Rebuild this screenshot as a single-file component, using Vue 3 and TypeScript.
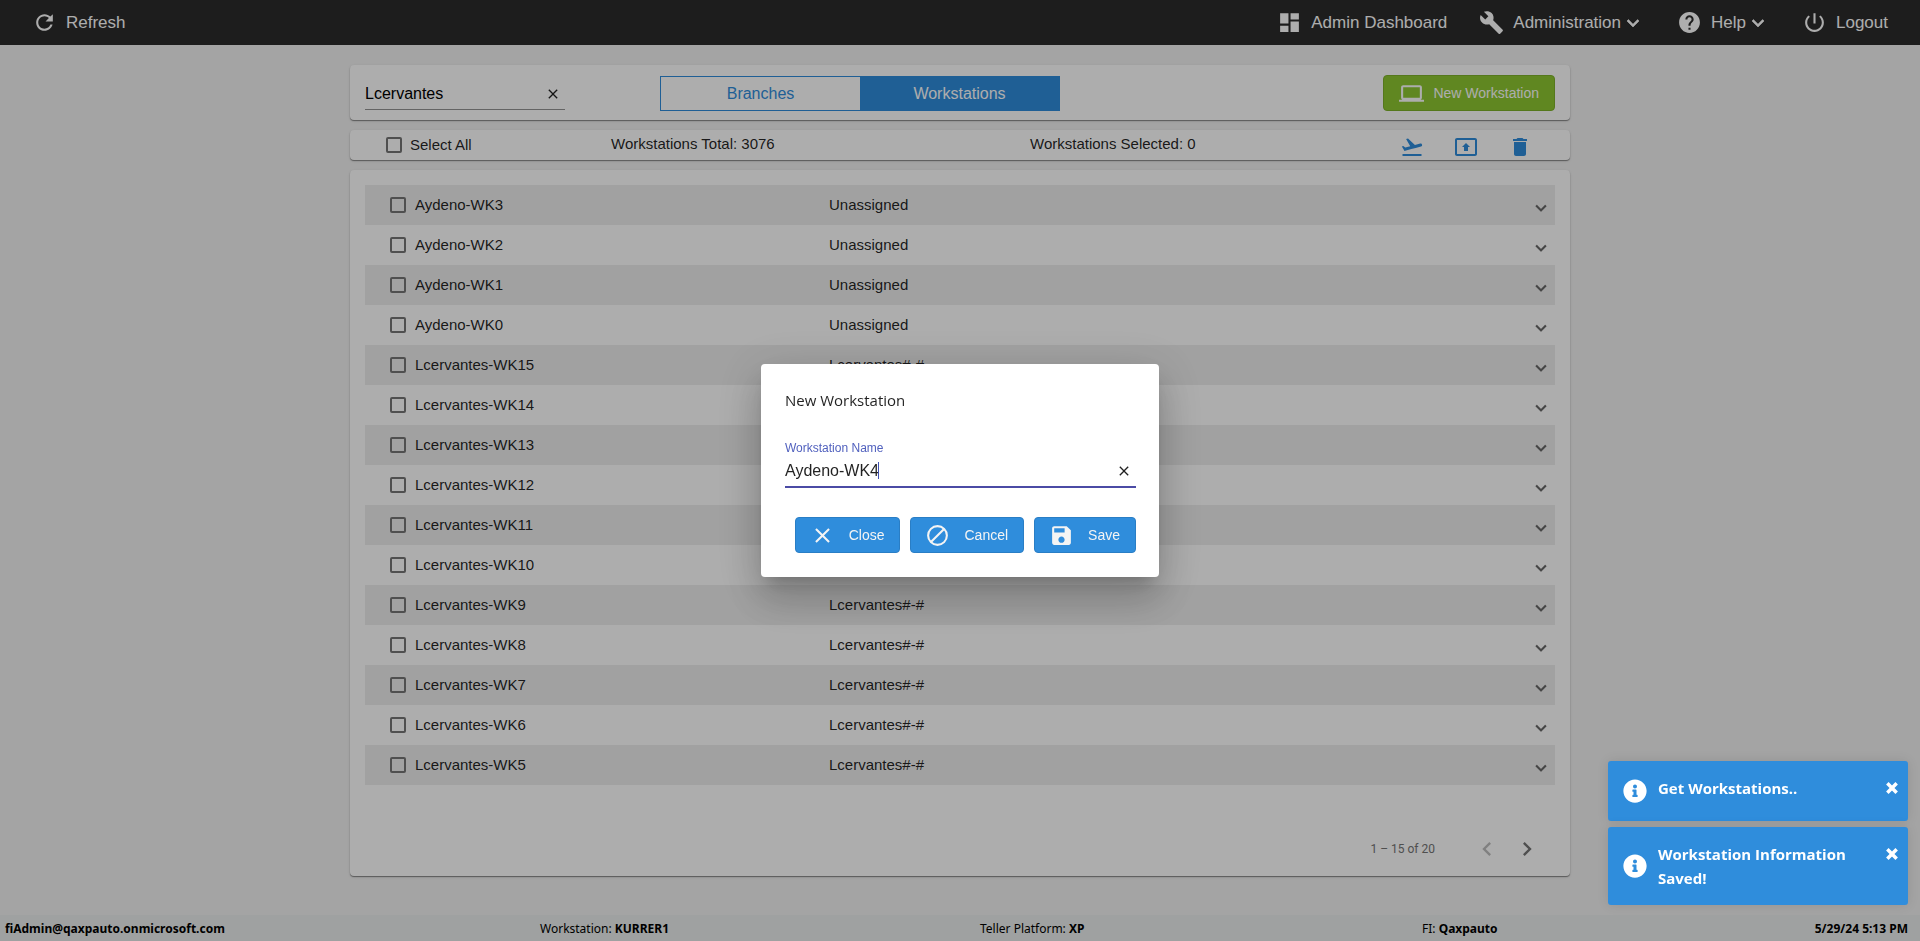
<script setup lang="ts">
import { reactive, ref } from 'vue'

interface Row {
  name: string
  branch: string
  checked: boolean
}

const search = ref('Lcervantes')
const workstationName = ref('Aydeno-WK4')
const selectAll = ref(false)

const rows = reactive<Row[]>([
  ...[3, 2, 1, 0].map((n) => ({ name: `Aydeno-WK${n}`, branch: 'Unassigned', checked: false })),
  ...[15, 14, 13, 12, 11, 10, 9, 8, 7, 6, 5].map((n) => ({
    name: `Lcervantes-WK${n}`,
    branch: 'Lcervantes#-#',
    checked: false,
  })),
])

const toasts = ref(['Get Workstations..', 'Workstation Information Saved!'])

const chevronDown = 'M7.41 8.59 12 13.17l4.59-4.58L18 10l-6 6-6-6z'
const closePath =
  'M19 6.41 17.59 5 12 10.59 6.41 5 5 6.41 10.59 12 5 17.59 6.41 19 12 13.41 17.59 19 19 17.59 13.41 12z'

const actions = [
  {
    label: 'Deploy',
    path: 'M2.5 19h19v2h-19zm19.57-9.36c-.21-.8-1.04-1.28-1.84-1.06L14.92 10l-6.9-6.43-1.93.51 4.14 7.17-4.97 1.33-1.97-1.54-1.45.39 1.82 3.16.77 1.33 1.6-.43 5.31-1.42 4.35-1.16L21 11.49c.81-.23 1.28-1.05 1.07-1.85z',
  },
  {
    label: 'Assign',
    path: 'M21 3H3c-1.11 0-2 .89-2 2v14c0 1.11.89 2 2 2h18c1.11 0 2-.89 2-2V5c0-1.11-.89-2-2-2zm0 16.02H3V4.98h18v14.04zM10 12H8l4-4 4 4h-2v4h-4v-4z',
  },
  { label: 'Delete', path: 'M6 19c0 1.1.9 2 2 2h8c1.1 0 2-.9 2-2V7H6v12zM19 4h-3.5l-1-1h-5l-1 1H5v2h14V4z' },
]
</script>

<template>
  <div class="page">
    <header class="topbar">
      <button type="button" class="nav-item">
        <svg viewBox="0 0 24 24" class="icon"><path d="M17.65 6.35C16.2 4.9 14.21 4 12 4c-4.42 0-7.99 3.58-7.99 8s3.57 8 7.99 8c3.73 0 6.84-2.55 7.73-6h-2.08c-.82 2.33-3.04 4-5.65 4-3.31 0-6-2.69-6-6s2.69-6 6-6c1.66 0 3.14.69 4.22 1.78L13 11h7V4l-2.35 2.35z" /></svg>
        <span class="nav-text">Refresh</span>
      </button>
      <nav class="nav">
        <a href="#" class="nav-item">
          <svg viewBox="0 0 24 24" class="icon"><path d="M3 13h8V3H3v10zm0 8h8v-6H3v6zm10 0h8V11h-8v10zm0-18v6h8V3h-8z" /></svg>
          <span class="nav-text">Admin Dashboard</span>
        </a>
        <button type="button" class="nav-item">
          <svg viewBox="0 0 24 24" class="icon"><path d="M22.7 19l-9.1-9.1c.9-2.3.4-5-1.5-6.9-2-2-5-2.4-7.4-1.3L9 6 6 9 1.6 4.7C.4 7.1.9 10.1 2.9 12.1c1.9 1.9 4.6 2.4 6.9 1.5l9.1 9.1c.4.4 1 .4 1.4 0l2.3-2.3c.5-.4.5-1.1.1-1.4z" /></svg>
          <span class="nav-text">Administration</span>
          <svg viewBox="0 0 24 24" class="caret-icon"><path :d="chevronDown" /></svg>
        </button>
        <button type="button" class="nav-item">
          <svg viewBox="0 0 24 24" class="icon"><path d="M12 2C6.48 2 2 6.48 2 12s4.48 10 10 10 10-4.48 10-10S17.52 2 12 2zm1 17h-2v-2h2v2zm2.07-7.75l-.9.92C13.45 12.9 13 13.5 13 15h-2v-.5c0-1.1.45-2.1 1.17-2.83l1.24-1.26c.37-.36.59-.86.59-1.41 0-1.1-.9-2-2-2s-2 .9-2 2H8c0-2.21 1.79-4 4-4s4 1.79 4 4c0 .88-.36 1.68-.93 2.25z" /></svg>
          <span class="nav-text">Help</span>
          <svg viewBox="0 0 24 24" class="caret-icon"><path :d="chevronDown" /></svg>
        </button>
        <a href="#" class="nav-item">
          <svg viewBox="0 0 24 24" class="icon"><path d="M13 3h-2v10h2V3zm4.83 2.17l-1.42 1.42C17.99 7.86 19 9.81 19 12c0 3.87-3.13 7-7 7s-7-3.13-7-7c0-2.19 1.01-4.14 2.58-5.42L6.17 5.17C4.23 6.82 3 9.26 3 12c0 4.97 4.03 9 9 9s9-4.03 9-9c0-2.74-1.23-5.18-3.17-6.83z" /></svg>
          <span class="nav-text">Logout</span>
        </a>
      </nav>
    </header>

    <main class="content">
      <section class="card filter">
        <div class="search">
          <input v-model="search" type="text" aria-label="Search workstations" class="search-input" />
          <button type="button" class="clear" aria-label="Clear search" @click="search = ''">
            <svg viewBox="0 0 24 24" class="clear-icon"><path :d="closePath" /></svg>
          </button>
        </div>
        <div class="toggle">
          <button type="button" class="toggle-item">Branches</button>
          <button type="button" class="toggle-item active">Workstations</button>
        </div>
        <div class="filter-end">
          <button type="button" class="btn green">
            <svg viewBox="0 0 24 24" class="icon"><path d="M20 18c1.1 0 1.99-.9 1.99-2L22 6c0-1.1-.9-2-2-2H4c-1.1 0-2 .9-2 2v10c0 1.1.9 2 2 2H0v2h24v-2h-4zM4 6h16v10H4V6z" /></svg>
            <span>New Workstation</span>
          </button>
        </div>
      </section>

      <section class="card summary">
        <label class="check"><input v-model="selectAll" type="checkbox" class="box" /><span>Select All</span></label>
        <span class="count">Workstations Total: 3076</span>
        <span class="count">Workstations Selected: 0</span>
        <div class="actions">
          <button v-for="a in actions" :key="a.label" type="button" class="action" :aria-label="a.label">
            <svg viewBox="0 0 24 24" class="action-icon"><path :d="a.path" /></svg>
          </button>
        </div>
      </section>

      <section class="card list">
        <ul class="rows">
          <li v-for="row in rows" :key="row.name" class="row">
            <label class="check"><input v-model="row.checked" type="checkbox" class="box" /><span>{{ row.name }}</span></label>
            <span class="branch">{{ row.branch }}</span>
            <button type="button" class="expand" :aria-label="`Expand ${row.name}`">
              <svg viewBox="0 0 24 24" class="expand-icon"><path :d="chevronDown" /></svg>
            </button>
          </li>
        </ul>
        <div class="pager">
          <span class="range">1 – 15 of 20</span>
          <button type="button" class="page-btn" aria-label="Previous page" disabled>
            <svg viewBox="0 0 24 24" class="page-icon"><path d="M15.41 7.41 14 6l-6 6 6 6 1.41-1.41L10.83 12z" /></svg>
          </button>
          <button type="button" class="page-btn" aria-label="Next page">
            <svg viewBox="0 0 24 24" class="page-icon"><path d="M10 6 8.59 7.41 13.17 12l-4.58 4.59L10 18l6-6z" /></svg>
          </button>
        </div>
      </section>
    </main>

    <footer class="footer">
      <b>fiAdmin@qaxpauto.onmicrosoft.com</b>
      <span>Workstation: <b>KURRER1</b></span>
      <span>Teller Platform: <b>XP</b></span>
      <span>FI: <b>Qaxpauto</b></span>
      <b>5/29/24 5:13 PM</b>
    </footer>
  </div>

  <div class="backdrop">
    <form class="dialog" role="dialog" aria-labelledby="dialog-title" @submit.prevent>
      <h2 id="dialog-title" class="title">New Workstation</h2>
      <div class="field">
        <label for="ws-name" class="field-label">Workstation Name</label>
        <div class="field-row">
          <input id="ws-name" v-model="workstationName" type="text" class="field-input" />
          <span class="text-caret"></span>
          <button type="button" class="clear" aria-label="Clear name" @click="workstationName = ''">
            <svg viewBox="0 0 24 24" class="clear-icon"><path :d="closePath" /></svg>
          </button>
        </div>
      </div>
      <div class="buttons">
        <button type="button" class="btn blue">
          <svg viewBox="0 0 24 24" class="icon"><path :d="closePath" /></svg>
          <span>Close</span>
        </button>
        <button type="button" class="btn blue">
          <svg viewBox="0 0 24 24" class="icon"><g fill="none" stroke="currentColor" stroke-width="2"><circle cx="12" cy="12" r="9" /><path d="M5.7 18.3 18.3 5.7" /></g></svg>
          <span>Cancel</span>
        </button>
        <button type="submit" class="btn blue">
          <svg viewBox="0 0 24 24" class="icon"><path d="M17 3H5c-1.11 0-2 .9-2 2v14c0 1.1.89 2 2 2h14c1.1 0 2-.9 2-2V7l-4-4zm-5 16c-1.66 0-3-1.34-3-3s1.34-3 3-3 3 1.34 3 3-1.34 3-3 3zm3-10H5V5h10v4z" /></svg>
          <span>Save</span>
        </button>
      </div>
    </form>
  </div>

  <div class="toasts">
    <div v-for="t in toasts" :key="t" class="toast" role="status">
      <svg viewBox="0 0 512 512" class="toast-icon"><path d="M256 8C119.043 8 8 119.083 8 256c0 136.997 111.043 248 248 248s248-111.003 248-248C504 119.083 392.957 8 256 8zm0 110c23.196 0 42 18.804 42 42s-18.804 42-42 42-42-18.804-42-42 18.804-42 42-42zm56 254c0 6.627-5.373 12-12 12h-88c-6.627 0-12-5.373-12-12v-24c0-6.627 5.373-12 12-12h12v-64h-12c-6.627 0-12-5.373-12-12v-24c0-6.627 5.373-12 12-12h64c6.627 0 12 5.373 12 12v100h12c6.627 0 12 5.373 12 12v24z" /></svg>
      <span class="toast-text">{{ t }}</span>
      <button type="button" class="toast-close" aria-label="Dismiss">
        <svg viewBox="0 0 12 12" class="toast-x"><path d="M2 2l8 8M10 2l-8 8" fill="none" stroke="currentColor" stroke-width="3" /></svg>
      </button>
    </div>
  </div>
</template>

<style>
html,
body,
#app {
  height: 100%;
}
</style>

<style scoped>
* {
  box-sizing: border-box;
}
button,
input {
  font: inherit;
  color: inherit;
  margin: 0;
  padding: 0;
  border: 0;
  background: none;
}
svg {
  display: block;
  flex: none;
  fill: currentColor;
}
.page {
  min-height: 100%;
  display: flex;
  flex-direction: column;
  background: #f2f2f2;
  color: rgba(0, 0, 0, 0.87);
  font: 15px/20px 'Liberation Sans', Arial, sans-serif;
}
.topbar {
  height: 45px;
  padding: 0 32px;
  display: flex;
  align-items: center;
  justify-content: space-between;
  background: #2c2c2c;
  color: #fff;
  font-size: 17px;
}
.nav {
  display: flex;
  gap: 32px;
}
.nav-item {
  display: flex;
  align-items: center;
  color: inherit;
  text-decoration: none;
}
.icon {
  width: 25px;
  height: 25px;
}
.nav-text {
  margin-left: 9px;
}
.caret-icon {
  width: 24px;
  height: 24px;
  stroke: currentColor;
  stroke-width: 0.6px;
}
.content {
  width: 100%;
  max-width: 1220px;
  margin: 0 auto;
  padding: 20px 0 39px;
  flex: 1;
  display: flex;
  flex-direction: column;
  gap: 10px;
}
.card {
  padding: 0 15px;
  border-radius: 4px;
  background: #fff;
  box-shadow: 0 1px 1px rgba(0, 0, 0, 0.4), 0 1px 3px rgba(0, 0, 0, 0.12);
}
.filter {
  height: 55px;
  padding-top: 1px;
  display: grid;
  grid-template-columns: 295px 400px 1fr;
  align-items: center;
}
.search {
  width: 200px;
  height: 34px;
  padding-top: 2px;
  display: flex;
  align-items: center;
  border-bottom: 1px solid #949494;
  font-size: 16px;
}
.search-input,
.field-input {
  flex: 1;
  min-width: 0;
  height: 24px;
  outline: 0;
}
.search-input {
  color: #000;
}
.clear {
  width: 24px;
  height: 24px;
  display: grid;
  place-items: center;
}
.clear-icon {
  width: 16px;
  height: 16px;
}
.toggle {
  height: 35px;
  display: flex;
  border: 1px solid #2f8ddc;
  font-size: 16px;
}
.toggle-item {
  flex: 1;
  padding-top: 1px;
  color: #2f8ddc;
}
.toggle-item.active {
  background: #2f8ddc;
  color: #fff;
}
.filter-end {
  display: flex;
  justify-content: flex-end;
}
.btn {
  height: 36px;
  padding: 0 15px 0 14px;
  display: flex;
  align-items: center;
  gap: 14px;
  border-radius: 4px;
  color: #f4f4f4;
  font-size: 14px;
}
.btn.green {
  padding-left: 15px;
  gap: 9px;
  border: 1px solid #7eb12a;
  background: #8ec831;
  color: #fff;
}
.btn.blue {
  border: 1px solid #2a7ec5;
  background: #2f8ddc;
}
.summary {
  height: 30px;
  display: grid;
  grid-template-columns: 225px 419px 1fr auto;
  align-items: center;
  padding: 0 38px 0 36px;
}
.check {
  display: flex;
  align-items: center;
  gap: 8px;
}
.row .check {
  gap: 9px;
}
.count {
  padding-bottom: 3px;
}
.box {
  appearance: none;
  width: 16px;
  height: 16px;
  border: 2px solid #757575;
  border-radius: 2px;
}
.actions {
  display: flex;
  gap: 30px;
  padding-top: 4px;
  color: #2f8ddc;
}
.action-icon {
  width: 24px;
  height: 24px;
}
.list {
  flex: 1;
  padding-top: 15px;
}
.rows {
  margin: 0;
  padding: 0;
  list-style: none;
}
.row {
  height: 40px;
  padding: 0 3px 0 25px;
  display: grid;
  grid-template-columns: 439px 1fr 22px;
  align-items: center;
}
.row:nth-child(odd) {
  background: #eee;
}
.expand {
  padding-top: 6px;
  color: #666;
}
.expand-icon {
  width: 22px;
  height: 22px;
  stroke: currentColor;
  stroke-width: 0.2px;
}
.pager {
  margin-top: 44px;
  padding-right: 8px;
  display: flex;
  align-items: center;
  justify-content: flex-end;
  color: #757575;
  font: 12px/16px Roboto, sans-serif;
}
.range {
  margin-right: 32px;
}
.page-btn {
  width: 40px;
  height: 40px;
  display: grid;
  place-items: center;
  color: #757575;
}
.page-btn:disabled {
  color: #bdbdbd;
}
.page-icon {
  width: 28px;
  height: 28px;
}
.footer {
  height: 26px;
  padding: 2px 12px 0 5px;
  display: grid;
  grid-template-columns: 535fr 440fr 442fr 336fr 150fr;
  align-items: center;
  background: #ebeeed;
  color: #000;
  font: 12px/18px 'Noto Sans', 'Open Sans', sans-serif;
  white-space: nowrap;
}
.footer > :last-child {
  justify-self: end;
}
.backdrop {
  position: fixed;
  inset: 0;
  display: grid;
  place-items: center;
  background: rgba(0, 0, 0, 0.32);
}
.dialog {
  width: 398px;
  padding: 23px 23px 24px 24px;
  border-radius: 4px;
  background: #fff;
  color: rgba(0, 0, 0, 0.87);
  font: 16px/20px 'Liberation Sans', Arial, sans-serif;
  box-shadow: 0 11px 15px -7px rgba(0, 0, 0, 0.2), 0 24px 38px 3px rgba(0, 0, 0, 0.14),
    0 9px 46px 8px rgba(0, 0, 0, 0.12);
}
.title {
  margin: 0 0 29px;
  font: 400 15px/26px 'Open Sans', 'Noto Sans', sans-serif;
}
.field-label {
  display: block;
  color: #5161be;
  font-size: 12px;
  line-height: 12px;
}
.field-row {
  position: relative;
  height: 34px;
  padding-top: 2px;
  display: flex;
  align-items: center;
  border-bottom: 2px solid #4b4ba5;
}
.text-caret {
  position: absolute;
  left: 93px;
  top: 8px;
  width: 1px;
  height: 17px;
  background: #3f51b5;
}
.buttons {
  margin-top: 29px;
  display: flex;
  justify-content: flex-end;
  gap: 10px;
}
.toasts {
  position: fixed;
  right: 12px;
  bottom: 36px;
  width: 300px;
  display: grid;
  gap: 6px;
  color: #fff;
  font: 700 15px/24px 'Open Sans', 'Noto Sans', sans-serif;
}
.toast {
  display: flex;
  align-items: center;
  gap: 11px;
  padding: 15px 9px 15px 15px;
  min-height: 60px;
  border-radius: 3px;
  background: #2f8ddc;
  box-shadow: 0 0 12px rgba(0, 0, 0, 0.1);
}
.toast-icon {
  width: 24px;
  height: 24px;
}
.toast-text {
  flex: 1;
  align-self: flex-start;
}
.toast-close {
  align-self: flex-start;
  padding-top: 5px;
}
.toast-x {
  width: 14px;
  height: 14px;
}
</style>
